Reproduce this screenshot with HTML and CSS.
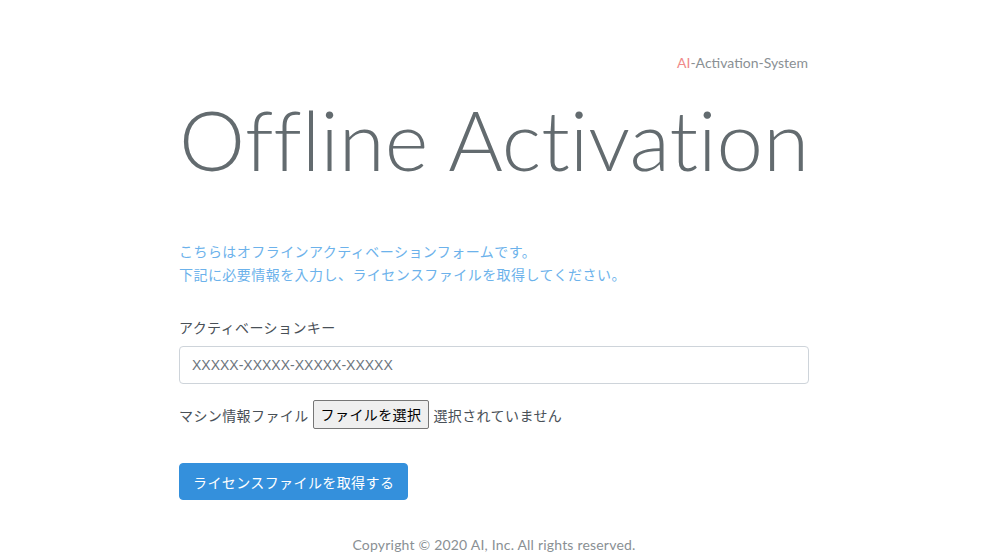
FILE: index.html
```html
<!DOCTYPE html>
<html lang="ja">
<head>
    <meta charset="UTF-8">
    <meta name="viewport" content="width=device-width, initial-scale=1.0">
    <title>Offline Activation</title>
    <link rel="stylesheet" href="styles.css">
</head>
<body>
    <div class="page">
        <div class="content">
            <div class="top-link"><span class="brand">AI</span>-Activation-System</div>
            <h1 class="title">Offline Activation</h1>

            <p class="lead">
                こちらはオフラインアクティベーションフォームです。<br>
                下記に必要情報を入力し、ライセンスファイルを取得してください。
            </p>

            <form class="activation-form">
                <div class="form-group">
                    <label for="key">アクティベーションキー</label>
                    <input type="text" id="key" class="form-control" placeholder="XXXXX-XXXXX-XXXXX-XXXXX">
                </div>
                <div class="file-row">
                    <span class="file-label">マシン情報ファイル</span>
                    <label class="file-button" for="machine">ファイルを選択</label>
                    <span class="file-name">選択されていません</span>
                    <input type="file" id="machine" class="file-input">
                </div>
                <button type="button" class="btn-primary">ライセンスファイルを取得する</button>
            </form>
        </div>
        <footer class="footer">Copyright © 2020 AI, Inc. All rights reserved.</footer>
    </div>
</body>
</html>
```

FILE: styles.css
```css
html, body {
    margin: 0;
    padding: 0;
    background-color: #fff;
    color: #636b6f;
    font-family: "Lato", "Noto Sans CJK JP", sans-serif;
}

.page {
    padding-left: 5px;
}

.content {
    width: 630px;
    margin: 0 auto;
}

.top-link {
    padding-right: 1px;
    text-align: right;
    font-size: 14px;
    color: #8a9094;
    padding-top: 55px;
    line-height: 16px;
}
.brand {
    color: #f08a8a;
}

.title {
    margin: 8px 0 0;
    padding-right: 3px;
    text-align: right;
    white-space: nowrap;
    font-size: 83.5px;
    font-weight: 300;
    font-variant-ligatures: none;
    line-height: 120px;
    color: #636b6f;
}

.lead {
    margin: 41px 0 0;
    font-family: "Noto Sans CJK JP", sans-serif;
    font-size: 14px;
    letter-spacing: 0.45px;
    line-height: 23px;
    color: #6cb2eb;
}

.activation-form {
    margin-top: 30px;
    font-family: "Noto Sans CJK JP", sans-serif;
    font-size: 14px;
    letter-spacing: 0.4px;
}

.form-group label {
    display: block;
    color: #495057;
    line-height: 22px;
    margin-bottom: 8px;
}

.form-control {
    display: block;
    width: 100%;
    box-sizing: border-box;
    height: 38px;
    padding: 6px 12px;
    border: 1px solid #ced4da;
    border-radius: 4px;
    font-family: "Liberation Sans", sans-serif;
    font-size: 14px;
    letter-spacing: 0;
    color: #495057;
}
.form-control::placeholder {
    color: #6c757d;
}

.file-row {
    display: flex;
    align-items: center;
    gap: 4px;
    margin-top: 16px;
    color: #495057;
}
.file-button {
    padding: 3px 7px;
    background-color: #efefef;
    border: 1px solid #767676;
    border-radius: 2px;
    color: #000;
    line-height: 21px;
}
.file-input {
    display: none;
}

.btn-primary {
    display: block;
    margin-top: 34px;
    padding: 0 13px;
    height: 37px;
    border: 1px solid #3490dc;
    border-radius: 4px;
    background-color: #3490dc;
    color: #fff;
    font-family: "Noto Sans CJK JP", sans-serif;
    font-size: 14px;
    letter-spacing: 0.4px;
}

.footer {
    margin-top: 36px;
    text-align: center;
    font-size: 14px;
    letter-spacing: 0.2px;
    color: #8a9094;
}
```
